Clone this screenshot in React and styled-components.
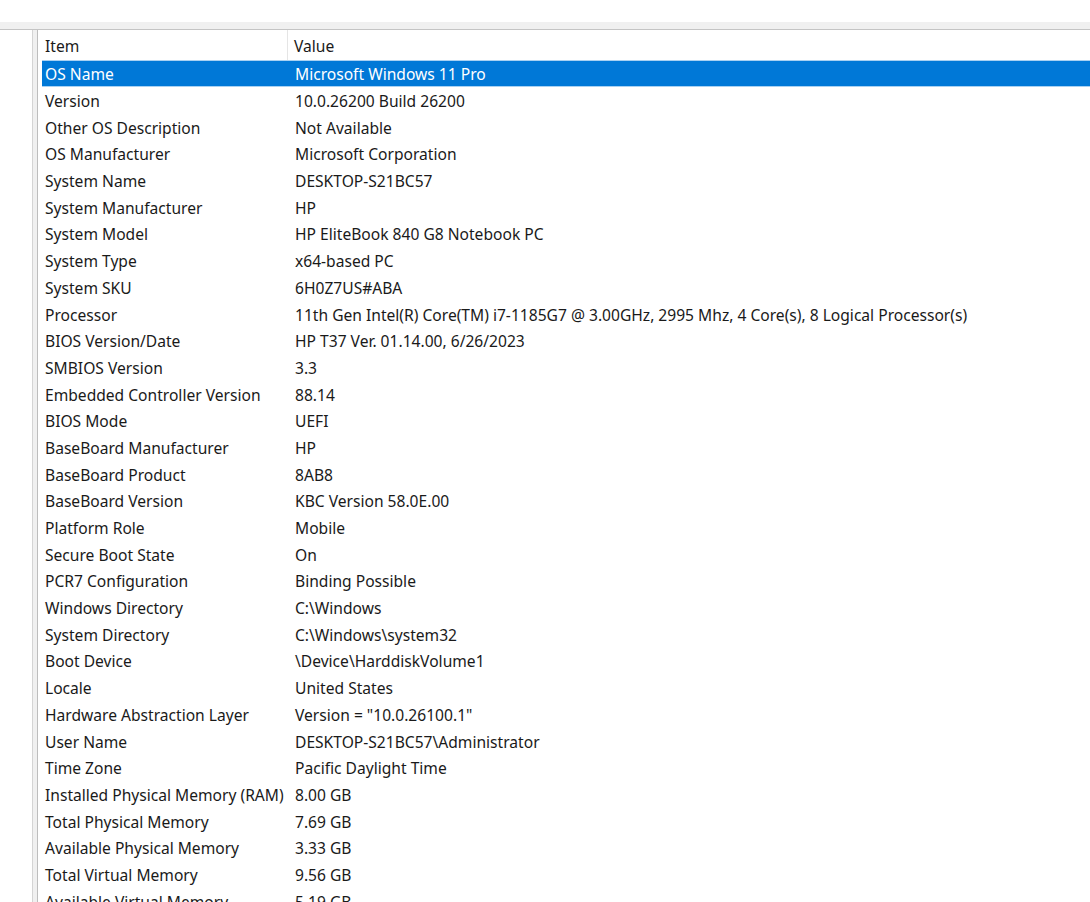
import styled, { createGlobalStyle } from 'styled-components';

const GlobalStyle = createGlobalStyle`
  html, body {
    margin: 0;
    padding: 0;
    background: #ffffff;
    overflow: hidden;
  }
  body {
    font-family: 'Noto Sans', 'Open Sans', 'Liberation Sans', sans-serif;
    color: #1a1a1a;
  }
`;

const Window = styled.div`
  width: 1090px;
  height: 902px;
  display: flex;
  flex-direction: column;
  overflow: hidden;
`;

const TopArea = styled.div`
  height: 22px;
  background: #ffffff;
`;

const Band = styled.div`
  height: 7px;
  background: #f0f0f0;
  border-bottom: 1px solid #c4c4c4;
`;

const Body = styled.div`
  flex: 1;
  display: flex;
  min-height: 0;
`;

const TreePane = styled.div`
  width: 32px;
  background: #ffffff;
  border-right: 1px solid #d4d4d4;
`;

const Splitter = styled.div`
  width: 4px;
  background: #f0f0f0;
`;

const ListPane = styled.div`
  flex: 1;
  display: flex;
  flex-direction: column;
  background: #ffffff;
  border-left: 1px solid #bdbdbd;
  padding-left: 4px;
  overflow: hidden;
`;

const Header = styled.div`
  display: grid;
  grid-template-columns: 246px 1fr;
  height: 30px;
  flex-shrink: 0;
`;

const HeaderCell = styled.div`
  display: flex;
  align-items: center;
  padding: 2px 0 0 ${p => (p.$first ? '3px' : '6px')};
  border-right: ${p => (p.$first ? '1px solid #e5e5e5' : 'none')};
  font-size: 15.6px;
  color: #1a1a1a;
`;

const Row = styled.div`
  display: grid;
  grid-template-columns: 246px 1fr;
  height: 26.7px;
  flex-shrink: 0;
  box-sizing: border-box;
  background: ${p => (p.$selected ? '#0078d7' : 'transparent')};
  color: ${p => (p.$selected ? '#ffffff' : '#1a1a1a')};
  border-top: 1px solid ${p => (p.$selected ? '#a9d1f2' : 'transparent')};
  border-bottom: 1px solid ${p => (p.$selected ? '#a9d1f2' : 'transparent')};
`;

const Cell = styled.div`
  display: flex;
  align-items: center;
  padding: 2px 0 0 ${p => (p.$first ? '3px' : '7px')};
  font-size: 15.6px;
  white-space: nowrap;
`;

const rows = [
  ['OS Name', 'Microsoft Windows 11 Pro'],
  ['Version', '10.0.26200 Build 26200'],
  ['Other OS Description', 'Not Available'],
  ['OS Manufacturer', 'Microsoft Corporation'],
  ['System Name', 'DESKTOP-S21BC57'],
  ['System Manufacturer', 'HP'],
  ['System Model', 'HP EliteBook 840 G8 Notebook PC'],
  ['System Type', 'x64-based PC'],
  ['System SKU', '6H0Z7US#ABA'],
  ['Processor', '11th Gen Intel(R) Core(TM) i7-1185G7 @ 3.00GHz, 2995 Mhz, 4 Core(s), 8 Logical Processor(s)'],
  ['BIOS Version/Date', 'HP T37 Ver. 01.14.00, 6/26/2023'],
  ['SMBIOS Version', '3.3'],
  ['Embedded Controller Version', '88.14'],
  ['BIOS Mode', 'UEFI'],
  ['BaseBoard Manufacturer', 'HP'],
  ['BaseBoard Product', '8AB8'],
  ['BaseBoard Version', 'KBC Version 58.0E.00'],
  ['Platform Role', 'Mobile'],
  ['Secure Boot State', 'On'],
  ['PCR7 Configuration', 'Binding Possible'],
  ['Windows Directory', 'C:\\Windows'],
  ['System Directory', 'C:\\Windows\\system32'],
  ['Boot Device', '\\Device\\HarddiskVolume1'],
  ['Locale', 'United States'],
  ['Hardware Abstraction Layer', 'Version = "10.0.26100.1"'],
  ['User Name', 'DESKTOP-S21BC57\\Administrator'],
  ['Time Zone', 'Pacific Daylight Time'],
  ['Installed Physical Memory (RAM)', '8.00 GB'],
  ['Total Physical Memory', '7.69 GB'],
  ['Available Physical Memory', '3.33 GB'],
  ['Total Virtual Memory', '9.56 GB'],
  ['Available Virtual Memory', '5.19 GB'],
];

const App = () => {
  return (
    <Window>
      <GlobalStyle />
      <TopArea />
      <Band />
      <Body>
        <TreePane />
        <Splitter />
        <ListPane>
          <Header>
            <HeaderCell $first>Item</HeaderCell>
            <HeaderCell>Value</HeaderCell>
          </Header>
          {rows.map(([item, value], i) => (
            <Row key={item} $selected={i === 0}>
              <Cell $first>{item}</Cell>
              <Cell>{value}</Cell>
            </Row>
          ))}
        </ListPane>
      </Body>
    </Window>
  );
};

export default App;
